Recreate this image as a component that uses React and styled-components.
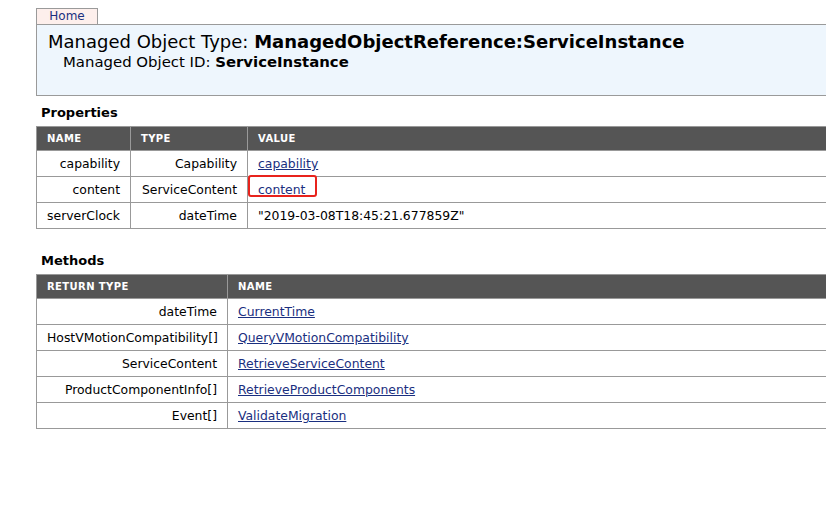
import React from 'react';
import styled, { createGlobalStyle } from 'styled-components';

const GlobalStyle = createGlobalStyle`
  html, body {
    margin: 0;
    padding: 0;
    background: #fff;
    overflow: hidden;
  }
  body {
    font-family: Verdana, "DejaVu Sans", sans-serif;
    color: #000;
  }
`;

const Page = styled.div`
  width: 1000px;
  padding: 8px 0 0 36px;
`;

const Tab = styled.a`
  display: block;
  box-sizing: border-box;
  height: 16px;
  width: 62px;
  border: 1px solid #9a9a9a;
  border-bottom: none;
  background: #fdefec;
  color: #1a2f80;
  font-size: 12px;
  line-height: 15px;
  text-align: center;
  text-decoration: none;
`;

const HeaderBox = styled.div`
  box-sizing: border-box;
  height: 72px;
  border: 1px solid #9a9a9a;
  background: #eef6fd;
  padding: 6px 11px 0;
`;

const Title = styled.div`
  font-size: 18px;
  line-height: 22px;

  b {
    font-weight: bold;
  }
`;

const SubTitle = styled.div`
  font-size: 14.9px;
  line-height: 18px;
  padding-left: 15px;
`;

const SectionTitle = styled.div`
  font-size: 13px;
  font-weight: bold;
  line-height: 16px;
  padding-left: 5px;
  margin: ${p => p.$top}px 0 5px;
`;

const Table = styled.table`
  border-collapse: collapse;
  table-layout: fixed;
  width: 100%;
  font-size: 12.4px;
`;

const Th = styled.th`
  box-sizing: border-box;
  height: 24px;
  background: #555;
  color: #fff;
  border: 1px solid #999;
  font-size: 10px;
  font-weight: bold;
  letter-spacing: 0.4px;
  text-align: left;
  padding: 0 10px;
  width: ${p => (p.$w ? `${p.$w}px` : 'auto')};
`;

const Td = styled.td`
  box-sizing: border-box;
  height: 26px;
  border: 1px solid #999;
  padding: 0 10px;
  text-align: ${p => (p.$right ? 'right' : 'left')};
  white-space: nowrap;
  position: relative;
`;

const Link = styled.a`
  color: #1a2f80;
  text-decoration: underline;
`;

const Highlight = styled.span`
  position: absolute;
  left: 0;
  top: -2px;
  width: 69px;
  height: 22px;
  box-sizing: border-box;
  border: 2px solid #e8231c;
  border-radius: 3px;
  pointer-events: none;
`;

const properties = [
  { name: 'capability', type: 'Capability', value: 'capability', link: true },
  { name: 'content', type: 'ServiceContent', value: 'content', link: true, marked: true },
  { name: 'serverClock', type: 'dateTime', value: '"2019-03-08T18:45:21.677859Z"' },
];

const methods = [
  { ret: 'dateTime', name: 'CurrentTime' },
  { ret: 'HostVMotionCompatibility[]', name: 'QueryVMotionCompatibility' },
  { ret: 'ServiceContent', name: 'RetrieveServiceContent' },
  { ret: 'ProductComponentInfo[]', name: 'RetrieveProductComponents' },
  { ret: 'Event[]', name: 'ValidateMigration' },
];

export default function App() {
  return (
    <>
      <GlobalStyle />
      <Page>
        <Tab href="#">Home</Tab>
        <HeaderBox>
          <Title>
            Managed Object Type: <b>ManagedObjectReference:ServiceInstance</b>
          </Title>
          <SubTitle>
            Managed Object ID: <b>ServiceInstance</b>
          </SubTitle>
        </HeaderBox>

        <SectionTitle $top={9}>Properties</SectionTitle>
        <Table>
          <thead>
            <tr>
              <Th $w={94}>NAME</Th>
              <Th $w={117}>TYPE</Th>
              <Th>VALUE</Th>
            </tr>
          </thead>
          <tbody>
            {properties.map(p => (
              <tr key={p.name}>
                <Td $right>{p.name}</Td>
                <Td $right>{p.type}</Td>
                <Td>
                  {p.link ? <Link href="#">{p.value}</Link> : p.value}
                  {p.marked && <Highlight />}
                </Td>
              </tr>
            ))}
          </tbody>
        </Table>

        <SectionTitle $top={24}>Methods</SectionTitle>
        <Table>
          <thead>
            <tr>
              <Th $w={191}>RETURN TYPE</Th>
              <Th>NAME</Th>
            </tr>
          </thead>
          <tbody>
            {methods.map(m => (
              <tr key={m.name}>
                <Td $right>{m.ret}</Td>
                <Td>
                  <Link href="#">{m.name}</Link>
                </Td>
              </tr>
            ))}
          </tbody>
        </Table>
      </Page>
    </>
  );
}
